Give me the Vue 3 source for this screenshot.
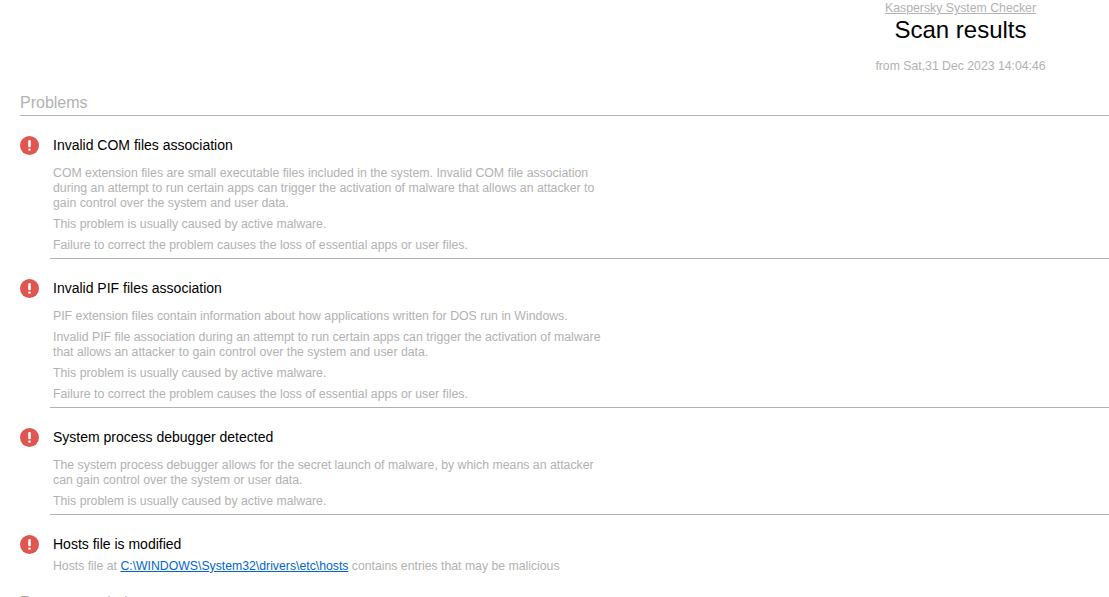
<template>
  <div class="page">
    <header class="head">
      <div class="head-box">
        <a class="brand" href="#">Kaspersky System Checker</a>
        <h1>Scan results</h1>
        <p class="date">from Sat,31 Dec 2023 14:04:46</p>
      </div>
    </header>

    <section>
      <h2>Problems</h2>
      <div v-for="item in problems" :key="item.title" class="problem">
        <div class="title-row">
          <svg class="icon" width="19" height="19" viewBox="0 0 19 19">
            <circle cx="9.5" cy="9.5" r="9.5" fill="#e0554f" />
            <rect x="8.2" y="4" width="2.6" height="7.2" rx="1" fill="#fff" />
            <rect x="8.2" y="12.4" width="2.6" height="2.4" rx="1" fill="#fff" />
          </svg>
          <h3>{{ item.title }}</h3>
        </div>
        <div class="body">
          <p v-for="text in item.texts" :key="text">{{ text }}</p>
        </div>
      </div>

      <div class="problem last">
        <div class="title-row">
          <svg class="icon" width="19" height="19" viewBox="0 0 19 19">
            <circle cx="9.5" cy="9.5" r="9.5" fill="#e0554f" />
            <rect x="8.2" y="4" width="2.6" height="7.2" rx="1" fill="#fff" />
            <rect x="8.2" y="12.4" width="2.6" height="2.4" rx="1" fill="#fff" />
          </svg>
          <h3>Hosts file is modified</h3>
        </div>
        <p class="hosts">Hosts file at <a href="#">C:\WINDOWS\System32\drivers\etc\hosts</a> contains entries that may be malicious</p>
      </div>
    </section>

    <h2 class="next">Recommendations</h2>
  </div>
</template>

<script setup>
const caused = 'This problem is usually caused by active malware.'
const failure = 'Failure to correct the problem causes the loss of essential apps or user files.'

const problems = [
  {
    title: 'Invalid COM files association',
    texts: [
      'COM extension files are small executable files included in the system. Invalid COM file association during an attempt to run certain apps can trigger the activation of malware that allows an attacker to gain control over the system and user data.',
      caused,
      failure
    ]
  },
  {
    title: 'Invalid PIF files association',
    texts: [
      'PIF extension files contain information about how applications written for DOS run in Windows.',
      'Invalid PIF file association during an attempt to run certain apps can trigger the activation of malware that allows an attacker to gain control over the system and user data.',
      caused,
      failure
    ]
  },
  {
    title: 'System process debugger detected',
    texts: [
      'The system process debugger allows for the secret launch of malware, by which means an attacker can gain control over the system or user data.',
      caused
    ]
  }
]
</script>

<style>
html, body {
  margin: 0;
  background: #fff;
  overflow: hidden;
}
</style>

<style scoped>
.page {
  height: 597px;
  overflow: hidden;
  font-family: "Liberation Sans", Arial, sans-serif;
  color: #b2b2b2;
}

.head {
  display: flex;
  justify-content: flex-end;
  height: 93px;
  padding-right: 63px;
}

.head-box {
  width: 171px;
  text-align: center;
}

.brand {
  display: block;
  font-size: 12.3px;
  line-height: 14px;
  margin-top: 1px;
  color: #b2b2b2;
}

h1 {
  margin: 1px 0 0;
  font-size: 24px;
  font-weight: 400;
  line-height: 28px;
  color: #000;
}

.date {
  margin: 14px 0 0;
  font-size: 12.25px;
  line-height: 16px;
}

h2 {
  margin: 0 0 0 20px;
  padding: 1px 0 3px;
  border-bottom: 1px solid #b2b2b2;
  font-size: 16px;
  font-weight: 400;
  line-height: 18px;
}

.problem {
  padding-top: 19px;
}

.title-row {
  display: flex;
  align-items: center;
  gap: 14px;
  padding-left: 20px;
  height: 20px;
}

.icon {
  flex: none;
}

h3 {
  margin: 0;
  font-size: 14px;
  font-weight: 400;
  line-height: 20px;
  color: #000;
}

.body {
  margin: 11px 0 0 50px;
  padding: 0 0 0 3px;
  border-bottom: 1px solid #b2b2b2;
}

.body p {
  width: 555px;
  margin: 0 0 6px;
  font-size: 12.3px;
  line-height: 15px;
}

.body p:last-child {
  margin-bottom: 5px;
}

.hosts {
  margin: 5px 0 0 53px;
  font-size: 12.25px;
  line-height: 15px;
}

.hosts a {
  color: #0066cc;
}

.next {
  margin-top: 20px;
  padding-top: 0;
  border: 0;
}
</style>
